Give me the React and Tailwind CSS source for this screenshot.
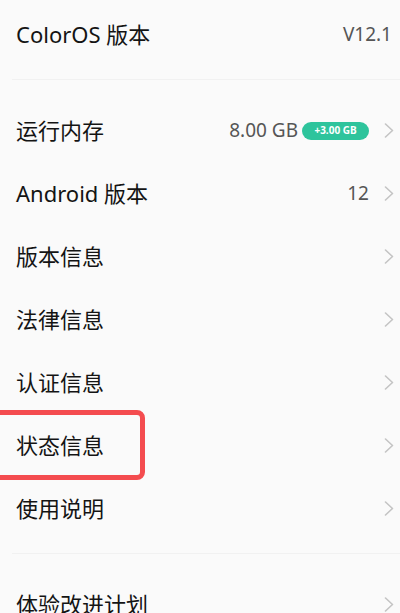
import React from 'react'

const FONT = { fontFamily: '"Noto Sans", "Noto Sans CJK SC", sans-serif' }

const ROWS = [
  { name: '运行内存', value: '8.00 GB', badge: '+3.00 GB' },
  { name: 'Android 版本', value: '12' },
  { name: '版本信息' },
  { name: '法律信息' },
  { name: '认证信息' },
  { name: '状态信息', marked: true },
  { name: '使用说明' },
]

function Chevron() {
  return (
    <svg width="10" height="15" viewBox="0 0 10 15" fill="none" className="shrink-0">
      <path d="M1.5 1 L8.5 7.5 L1.5 14" stroke="#c4c4c4" strokeWidth="1.6" strokeLinecap="round" strokeLinejoin="round" />
    </svg>
  )
}

function Row({ item }) {
  return (
    <div className="relative flex items-center h-[63px] pl-4 pr-[6px]">
      <span className="flex-1 text-[22px] text-[#141414]">{item.name}</span>
      {item.value && <span className="text-[19px] text-[#555555]">{item.value}</span>}
      {item.badge && (
        <span className="ml-[4px] h-[18px] w-[67px] rounded-full bg-[#2ec49c] text-white text-[10px] font-bold flex items-center justify-center">
          {item.badge}
        </span>
      )}
      <span className={item.value ? 'ml-[15px]' : ''}>
        <Chevron />
      </span>
      {item.marked && (
        <div className="absolute left-[-8px] top-[-4px] w-[153px] h-[70px] border-[5px] border-[#f44c4f] rounded-[8px]"></div>
      )}
    </div>
  )
}

function Divider() {
  return (
    <div className="h-[33px] pt-[13px]">
      <div className="ml-[12px] h-px bg-[#f1f1f1]"></div>
    </div>
  )
}

export default function App() {
  return (
    <div className="w-[400px] h-[613px] overflow-hidden bg-[#fafafa]" style={FONT}>
      <div className="flex items-center h-[66px] pt-[3px] pl-4 pr-2">
        <span className="flex-1 text-[22px] text-[#141414]">ColorOS 版本</span>
        <span className="text-[19px] text-[#555555]">V12.1</span>
      </div>
      <Divider />
      {ROWS.map((item) => (
        <Row key={item.name} item={item} />
      ))}
      <Divider />
      <Row item={{ name: '体验改进计划' }} />
    </div>
  )
}
